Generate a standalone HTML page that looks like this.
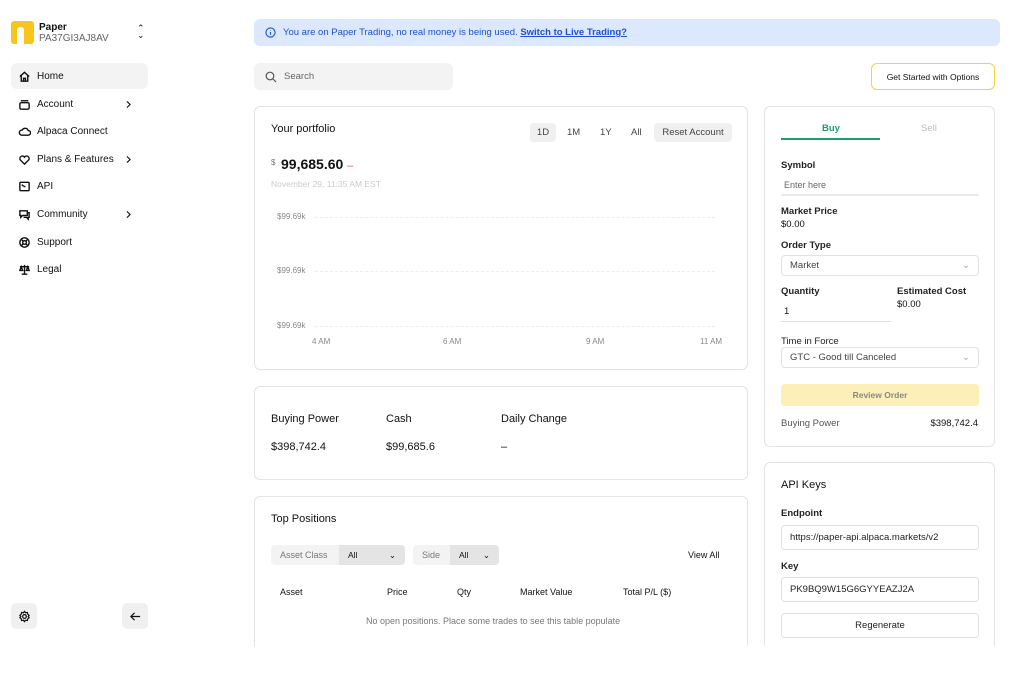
<!DOCTYPE html>
<html><head><meta charset="utf-8"><style>
*{box-sizing:border-box;margin:0;padding:0}
body{width:1015px;height:677px;overflow:hidden;background:#fff;font-family:"Liberation Sans",sans-serif;color:#111;position:relative;font-size:10px}
.a{position:absolute}
.clip{position:absolute;left:0;top:0;width:1015px;height:646px;overflow:hidden}
.card{position:absolute;border:1px solid #e4e4e4;border-radius:6px;background:#fff}
.nav{position:absolute;left:11px;width:137px;height:26px;border-radius:6px;display:flex;align-items:center;padding-left:7px;font-size:10px}
.nav svg{width:13px;height:13px;margin-right:6px;fill:none;stroke:#111;stroke-width:1.5}
.chev{position:absolute;right:8px;top:7px}
.lbl{font-size:9.5px;font-weight:bold;color:#222}
.inp{position:absolute;border:1px solid #e2e2e2;border-radius:4px;font-size:9.5px;display:flex;align-items:center;padding-left:8px;color:#444}
</style></head><body>
<div class="a" style="left:11px;top:21px;width:23px;height:23px;background:#f8c51c;border-radius:3px"></div>
<div class="a" style="left:17px;top:27px;width:7px;height:17px;background:#fff;border-radius:3px 3px 0 0"></div>
<div class="a" style="left:39px;top:22px;font-size:10px;font-weight:bold">Paper</div>
<div class="a" style="left:39px;top:33px;font-size:10px;color:#666">PA37GI3AJ8AV</div>
<div class="a" style="left:137px;top:25px;font-size:9px;line-height:7px">⌃<br>⌄</div>

<div class="nav" style="top:63px;background:#f3f3f3"><svg viewBox="0 0 14 14"><path d="M2 7L7 2.5 12 7M3.5 6v6h7V6M6 12V9h2v3"/></svg>Home</div>
<div class="nav" style="top:91px"><svg viewBox="0 0 14 14"><rect x="2" y="5" width="10" height="7" rx="1.5"/><path d="M3 3h8"/></svg>Account<svg class="chev" viewBox="0 0 14 14" style="width:11px"><path d="M5 3l4 4-4 4"/></svg></div>
<div class="nav" style="top:118px"><svg viewBox="0 0 14 14"><path d="M4 11h7a2.5 2.5 0 000-5 3.5 3.5 0 00-6.5-.5A2.7 2.7 0 004 11z"/></svg>Alpaca Connect</div>
<div class="nav" style="top:146px"><svg viewBox="0 0 14 14"><path d="M7 12L2.5 7.5a2.6 2.6 0 014.5-3 2.6 2.6 0 014.5 3z"/></svg>Plans &amp; Features<svg class="chev" viewBox="0 0 14 14" style="width:11px"><path d="M5 3l4 4-4 4"/></svg></div>
<div class="nav" style="top:173px"><svg viewBox="0 0 14 14"><rect x="2" y="2.5" width="10" height="9" rx="1"/><path d="M4 5l2 1.5M6 7h2"/></svg>API</div>
<div class="nav" style="top:201px"><svg viewBox="0 0 14 14"><path d="M2 3h8v5H5l-2 2V8H2zM10 5h2v5h-1v2l-2-2H6"/></svg>Community<svg class="chev" viewBox="0 0 14 14" style="width:11px"><path d="M5 3l4 4-4 4"/></svg></div>
<div class="nav" style="top:229px"><svg viewBox="0 0 14 14"><circle cx="7" cy="7" r="5"/><circle cx="7" cy="7" r="2"/><path d="M3.5 3.5l2 2M10.5 3.5l-2 2M3.5 10.5l2-2M10.5 10.5l-2-2"/></svg>Support</div>
<div class="nav" style="top:256px"><svg viewBox="0 0 14 14"><path d="M7 2v10M4 12h6M2 4h10M3.5 4L2 8h3zM10.5 4L9 8h3z"/></svg>Legal</div>

<div class="a" style="left:11px;top:603px;width:26px;height:26px;background:#f0f0f0;border-radius:5px;display:flex;align-items:center;justify-content:center"><svg width="13" height="13" viewBox="0 0 14 14" fill="none" stroke="#111" stroke-width="1.3"><circle cx="7" cy="7" r="2"/><path d="M7 1.5l1.2 1.5 1.9-.4.4 1.9 1.5 1.2-1 1.3 1 1.3-1.5 1.2-.4 1.9-1.9-.4L7 12.5l-1.2-1.5-1.9.4-.4-1.9L2 8.3l1-1.3-1-1.3 1.5-1.2.4-1.9 1.9.4z"/></svg></div>
<div class="a" style="left:122px;top:603px;width:26px;height:26px;background:#f0f0f0;border-radius:5px;display:flex;align-items:center;justify-content:center"><svg width="13" height="13" viewBox="0 0 14 14" fill="none" stroke="#111" stroke-width="1.3"><path d="M12 7H2M6 3L2 7l4 4"/></svg></div>

<div class="clip">
<div class="a" style="left:254px;top:19px;width:746px;height:27px;background:#dbe8fd;border-radius:6px;font-size:9.5px;color:#1d4fd8;display:flex;align-items:center;padding-left:11px">
<svg width="11" height="11" viewBox="0 0 12 12" fill="none" stroke="#1d4fd8" stroke-width="1.2" style="margin-right:7px"><circle cx="6" cy="6" r="5"/><path d="M6 5.5v3M6 3.5v.5"/></svg>You are on Paper Trading, no real money is being used.&nbsp;<b style="text-decoration:underline">Switch to Live Trading?</b></div>

<div class="a" style="left:254px;top:63px;width:199px;height:27px;background:#f3f3f3;border-radius:6px;display:flex;align-items:center;padding-left:11px;font-size:9.5px;color:#666"><svg width="12" height="12" viewBox="0 0 12 12" fill="none" stroke="#555" stroke-width="1.2" style="margin-right:7px"><circle cx="5" cy="5" r="3.8"/><path d="M8 8l3 3"/></svg>Search</div>

<div class="a" style="left:871px;top:63px;width:124px;height:27px;border:1.3px solid #f5d33f;border-radius:6px;font-size:8.5px;display:flex;align-items:center;justify-content:center">Get Started with Options</div>

<div class="card" style="left:254px;top:106px;width:494px;height:264px">
<div class="a" style="left:16px;top:16px;font-size:11px">Your portfolio</div>
<div class="a" style="left:275px;top:16px;width:26px;height:19px;background:#f0f0f0;border-radius:4px;font-size:9.5px;display:flex;align-items:center;justify-content:center;color:#444">1D</div>
<div class="a" style="left:312px;top:20px;font-size:9.5px;color:#444">1M</div>
<div class="a" style="left:345px;top:20px;font-size:9.5px;color:#444">1Y</div>
<div class="a" style="left:376px;top:20px;font-size:9.5px;color:#444">All</div>
<div class="a" style="left:399px;top:16px;width:78px;height:19px;background:#f0f0f0;border-radius:4px;font-size:9.5px;display:flex;align-items:center;justify-content:center;color:#444">Reset Account</div>
<div class="a" style="left:16px;top:51px;font-size:8px;color:#777">$</div>
<div class="a" style="left:26px;top:49px;font-size:14px;font-weight:bold">99,685.60 <span style="color:#e55;font-size:11px;font-weight:normal">–</span></div>
<div class="a" style="left:16px;top:72px;font-size:8.5px;color:#ccc">November 29, 11:35 AM EST</div>
<div class="a" style="left:22px;top:105px;font-size:8px;color:#888">$99.69k</div>
<div class="a" style="left:22px;top:159px;font-size:8px;color:#888">$99.69k</div>
<div class="a" style="left:22px;top:214px;font-size:8px;color:#888">$99.69k</div>
<div class="a" style="left:60px;top:110px;width:400px;border-top:1px dashed #eee"></div>
<div class="a" style="left:60px;top:164px;width:400px;border-top:1px dashed #eee"></div>
<div class="a" style="left:60px;top:219px;width:400px;border-top:1px dashed #eee"></div>
<div class="a" style="left:57px;top:230px;font-size:8px;color:#888">4 AM</div>
<div class="a" style="left:188px;top:230px;font-size:8px;color:#888">6 AM</div>
<div class="a" style="left:331px;top:230px;font-size:8px;color:#888">9 AM</div>
<div class="a" style="left:445px;top:230px;font-size:8px;color:#888">11 AM</div>
</div>

<div class="card" style="left:254px;top:386px;width:494px;height:94px">
<div class="a" style="left:16px;top:26px;font-size:11px">Buying Power</div>
<div class="a" style="left:131px;top:26px;font-size:11px">Cash</div>
<div class="a" style="left:246px;top:26px;font-size:11px">Daily Change</div>
<div class="a" style="left:16px;top:54px;font-size:11px">$398,742.4</div>
<div class="a" style="left:131px;top:54px;font-size:11px">$99,685.6</div>
<div class="a" style="left:246px;top:54px;font-size:11px">–</div>
</div>

<div class="card" style="left:254px;top:496px;width:494px;height:200px">
<div class="a" style="left:16px;top:16px;font-size:11px">Top Positions</div>
<div class="a" style="left:16px;top:48px;width:134px;height:20px;background:#f3f3f3;border-radius:4px"></div>
<div class="a" style="left:25px;top:53px;font-size:9px;color:#777">Asset Class</div>
<div class="a" style="left:84px;top:48px;width:66px;height:20px;background:#e4e4e4;border-radius:0 4px 4px 0;font-size:8.5px;padding:5px 9px">All<span style="float:right">⌄</span></div>
<div class="a" style="left:158px;top:48px;width:86px;height:20px;background:#f3f3f3;border-radius:4px"></div>
<div class="a" style="left:167px;top:53px;font-size:9px;color:#777">Side</div>
<div class="a" style="left:195px;top:48px;width:49px;height:20px;background:#e4e4e4;border-radius:0 4px 4px 0;font-size:8.5px;padding:5px 9px">All<span style="float:right">⌄</span></div>
<div class="a" style="left:433px;top:53px;font-size:9px">View All</div>
<div class="a" style="left:25px;top:90px;font-size:9px">Asset</div>
<div class="a" style="left:132px;top:90px;font-size:9px">Price</div>
<div class="a" style="left:202px;top:90px;font-size:9px">Qty</div>
<div class="a" style="left:265px;top:90px;font-size:9px">Market Value</div>
<div class="a" style="left:368px;top:90px;font-size:9px">Total P/L ($)</div>
<div class="a" style="left:111px;top:119px;font-size:9px;color:#777">No open positions. Place some trades to see this table populate</div>
</div>

<div class="card" style="left:764px;top:106px;width:231px;height:341px">
<div class="a" style="left:57px;top:16px;font-size:9.5px;font-weight:bold;color:#1aa06b">Buy</div>
<div class="a" style="left:16px;top:31px;width:99px;height:2px;background:#1aa06b"></div>
<div class="a" style="left:156px;top:16px;font-size:9.5px;color:#bbb">Sell</div>
<div class="a lbl" style="left:16px;top:53px">Symbol</div>
<div class="a" style="left:19px;top:73px;font-size:9px;color:#666">Enter here</div>
<div class="a" style="left:16px;top:87px;width:198px;height:2px;background:#eaeaea"></div>
<div class="a lbl" style="left:16px;top:99px">Market Price</div>
<div class="a" style="left:16px;top:112px;font-size:9.5px">$0.00</div>
<div class="a lbl" style="left:16px;top:133px">Order Type</div>
<div class="inp" style="left:16px;top:148px;width:198px;height:21px">Market<span style="position:absolute;right:8px;color:#aaa">⌄</span></div>
<div class="a lbl" style="left:16px;top:179px">Quantity</div>
<div class="a lbl" style="left:132px;top:179px">Estimated Cost</div>
<div class="a" style="left:132px;top:192px;font-size:9.5px">$0.00</div>
<div class="a" style="left:19px;top:199px;font-size:9.5px">1</div>
<div class="a" style="left:16px;top:214px;width:110px;height:1px;background:#ddd"></div>
<div class="a lbl" style="left:16px;top:229px;font-weight:normal">Time in Force</div>
<div class="inp" style="left:16px;top:240px;width:198px;height:21px">GTC - Good till Canceled<span style="position:absolute;right:8px;color:#aaa">⌄</span></div>
<div class="a" style="left:16px;top:277px;width:198px;height:22px;background:#fcefb8;border-radius:4px;font-size:8.5px;font-weight:bold;color:#888;display:flex;align-items:center;justify-content:center">Review Order</div>
<div class="a" style="left:16px;top:311px;font-size:9.5px;color:#555">Buying Power</div>
<div class="a" style="right:16px;top:311px;font-size:9.5px">$398,742.4</div>
</div>

<div class="card" style="left:764px;top:462px;width:231px;height:240px">
<div class="a" style="left:16px;top:16px;font-size:11px">API Keys</div>
<div class="a lbl" style="left:16px;top:45px">Endpoint</div>
<div class="inp" style="left:16px;top:62px;width:198px;height:25px;color:#222">https://paper-api.alpaca.markets/v2</div>
<div class="a lbl" style="left:16px;top:98px">Key</div>
<div class="inp" style="left:16px;top:114px;width:198px;height:25px;color:#222">PK9BQ9W15G6GYYEAZJ2A</div>
<div class="inp" style="left:16px;top:150px;width:198px;height:25px;justify-content:center;padding:0;color:#222">Regenerate</div>
</div>
</div>
</body></html>
